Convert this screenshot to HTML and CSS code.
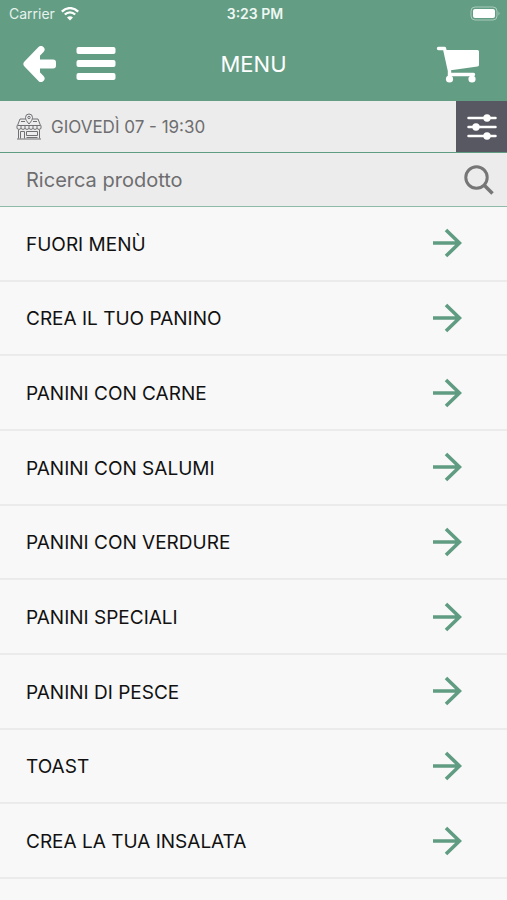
FILE: index.html
```html
<!DOCTYPE html>
<html lang="it">
<head>
<meta charset="utf-8">
<meta name="viewport" content="width=device-width, initial-scale=1">
<title>Menu</title>
<link rel="stylesheet" href="styles.css">
</head>
<body>
<svg class="sprite" aria-hidden="true">
  <symbol id="arrow" viewBox="0 0 30 30"><path d="M1 15H28M14 2L27.500 15L14 28" fill="none" stroke="currentColor" stroke-width="3.600"/></symbol>
</svg>
<header class="top">
  <div class="status">
    <div class="carrier">
      <span>Carrier</span>
      <svg width="18" height="14" viewBox="0 0 18 14" aria-hidden="true"><path d="M0.8 4.6C5.5-.1 12.500-.1 17.200 4.600M3.800 7.500C6.800 4.600 11.200 4.600 14.200 7.500" fill="none" stroke="#fff" stroke-width="2.300"/><path d="M9 13.500L6 10.500C7.800 8.900 10.200 8.900 12 10.500Z" fill="#fff"/></svg>
    </div>
    <span class="time">3:23 PM</span>
    <svg class="battery" width="31" height="15" viewBox="0 0 31 15" aria-hidden="true"><rect x="1" y="1" width="26" height="13" rx="4" fill="none" stroke="#a9cbbb"/><rect x="3" y="3" width="22" height="9" rx="2" fill="#fff"/><path d="M28.500 5.500Q30.500 7.500 28.500 9.500Z" fill="#a9cbbb"/></svg>
  </div>
  <nav class="bar">
    <div class="left">
      <button aria-label="Indietro"><svg width="34" height="36" viewBox="0 0 34 36"><path d="M19 3.500L5 18L19 32.500" fill="none" stroke="#fff" stroke-width="7" stroke-linecap="round" stroke-linejoin="round"/><path d="M5 18L18 6V30Z" fill="#fff"/><rect x="8" y="13.500" width="26" height="9" rx="3" fill="#fff"/></svg></button>
      <button aria-label="Apri menu"><svg width="40" height="34" viewBox="0 0 40 34"><g fill="#fff"><rect x="0.500" width="39" height="7" rx="2"/><rect x="0.500" y="13" width="39" height="7" rx="2"/><rect x="0.500" y="26" width="39" height="7" rx="2"/></g></svg></button>
    </div>
    <h1>MENU</h1>
    <button class="cart" aria-label="Carrello"><svg width="44" height="38" viewBox="0 0 44 38"><path d="M2.500 3.500H8.500L13.500 26V32M13.500 29.500H37.500" fill="none" stroke="#fff" stroke-width="3.400" stroke-linecap="round" stroke-linejoin="round"/><path d="M8.500 5H41.500Q43 5 43 6.500V20Q43 21.300 41.500 21.500L13 25.500Z" fill="#fff"/><circle cx="13.500" cy="34" r="3.600" fill="#fff"/><circle cx="36" cy="34" r="3.600" fill="#fff"/></svg></button>
  </nav>
</header>
<section class="info">
  <div class="slot">
    <svg width="26" height="28" viewBox="0 0 26 28" fill="none" stroke="#707074" aria-hidden="true"><path d="M9.500 6H4L1.500 12.500H24.500L22 6H16.500M5 8.500H9M17 8.500H21"/><path d="M13 11C10.500 8 9.500 6.500 9.500 4.500A3.500 3.500 0 0 1 16.500 4.500C16.500 6.500 15.500 8 13 11Z"/><circle cx="13" cy="4.500" r="1.200"/><path d="M1 12.500V15.500Q3 17.500 5 15.500Q7 17.500 9 15.500Q11 17.500 13 15.500Q15 17.500 17 15.500Q19 17.500 21 15.500Q23 17.500 25 15.500V12.500M5 13V15.500M9 13V15.500M13 13V15.500M17 13V15.500M21 13V15.500"/><path d="M2.500 17V25.500M23.500 17V25.500M1 26H25M4.500 25.500V18.500H8.500V25.500M10.500 18.500H21.500V22.500H10.500ZM10.500 24.500H21.500"/></svg>
    <span>GIOVEDÌ 07 - 19:30</span>
  </div>
  <button class="filter" aria-label="Filtri"><svg width="30" height="26" viewBox="0 0 30 26"><path d="M1.500 4H28.500M1.500 13H28.500M1.500 22H28.500" stroke="#fff" stroke-width="2.500" stroke-linecap="round"/><g fill="#fff"><circle cx="20" cy="4" r="3.700"/><circle cx="9" cy="13" r="3.700"/><circle cx="20" cy="22" r="3.700"/></g></svg></button>
</section>
<form class="search">
  <input type="search" aria-label="Ricerca prodotto" placeholder="Ricerca prodotto">
  <button type="button" aria-label="Cerca"><svg width="30" height="30" viewBox="0 0 30 30" fill="none" stroke="#767676"><circle cx="12.500" cy="12.500" r="10.700" stroke-width="3"/><path d="M20 20L28.500 28.500" stroke-width="3.600"/></svg></button>
</form>
<main class="list">
  <a href="#fuori-menu"><span>FUORI MENÙ</span><svg><use href="#arrow"/></svg></a>
  <a href="#crea-panino"><span>CREA IL TUO PANINO</span><svg><use href="#arrow"/></svg></a>
  <a href="#carne"><span>PANINI CON CARNE</span><svg><use href="#arrow"/></svg></a>
  <a href="#salumi"><span>PANINI CON SALUMI</span><svg><use href="#arrow"/></svg></a>
  <a href="#verdure"><span>PANINI CON VERDURE</span><svg><use href="#arrow"/></svg></a>
  <a href="#speciali"><span>PANINI SPECIALI</span><svg><use href="#arrow"/></svg></a>
  <a href="#pesce"><span>PANINI DI PESCE</span><svg><use href="#arrow"/></svg></a>
  <a href="#toast"><span>TOAST</span><svg><use href="#arrow"/></svg></a>
  <a href="#insalata"><span>CREA LA TUA INSALATA</span><svg><use href="#arrow"/></svg></a>
</main>
</body>
</html>
```
FILE: styles.css
```css
* { box-sizing: border-box; }

body {
  margin: 0;
  min-height: 100vh;
  display: flex;
  flex-direction: column;
  background: #f8f8f8;
  color: #111;
  font-family: Inter, "Liberation Sans", sans-serif;
}

svg { display: block; flex: none; }

button {
  display: block;
  padding: 0;
  border: 0;
  background: none;
  cursor: pointer;
}

.sprite { width: 0; height: 0; position: absolute; }

.top { background: #639d84; color: #fff; }

.status {
  display: grid;
  grid-template-columns: 1fr auto 1fr;
  align-items: center;
  height: 27px;
  padding: 0 6px 0 9px;
  font-size: 14px;
}

.carrier { display: flex; align-items: center; gap: 6px; color: #e6f2ec; }

.time { font-weight: 600; color: #eef7f2; }

.battery { justify-self: end; }

.bar {
  display: grid;
  grid-template-columns: 1fr auto 1fr;
  align-items: center;
  height: 74px;
  padding: 0 22px;
}

.left { display: flex; align-items: center; gap: 20px; }

h1 {
  margin: 0;
  font-size: 22px;
  font-weight: 400;
}

.cart { justify-self: end; margin-right: 5px; }

.info {
  display: flex;
  height: 52px;
  background: #ececec;
  border-bottom: 1px solid #5f9c82;
}

.slot {
  flex: 1;
  display: flex;
  align-items: center;
  gap: 9px;
  padding-left: 16px;
  color: #6e6e70;
  font-size: 17px;
}

.filter {
  width: 51px;
  display: grid;
  place-items: center;
  background: #575861;
}

.search {
  display: flex;
  align-items: center;
  height: 54px;
  padding: 0 13px 0 26px;
  background: #ececec;
  border-bottom: 1px solid #8dbba7;
}

.search input {
  flex: 1;
  min-width: 0;
  padding: 0;
  border: 0;
  outline: 0;
  background: none;
  font: inherit;
  font-size: 20px;
}

.search input::placeholder { color: #6e6e70; opacity: 1; }

.list {
  flex: 1;
  display: grid;
  grid-auto-rows: 1fr;
  padding-bottom: 21px;
}

.list a {
  display: flex;
  align-items: center;
  justify-content: space-between;
  min-height: 48px;
  padding: 0 45px 0 26px;
  border-bottom: 2px solid #ebebeb;
  color: inherit;
  font-size: 19px;
  text-decoration: none;
}

.list span { padding-top: 2px; }

.list svg { width: 30px; height: 30px; color: #5f9c82; }
```
